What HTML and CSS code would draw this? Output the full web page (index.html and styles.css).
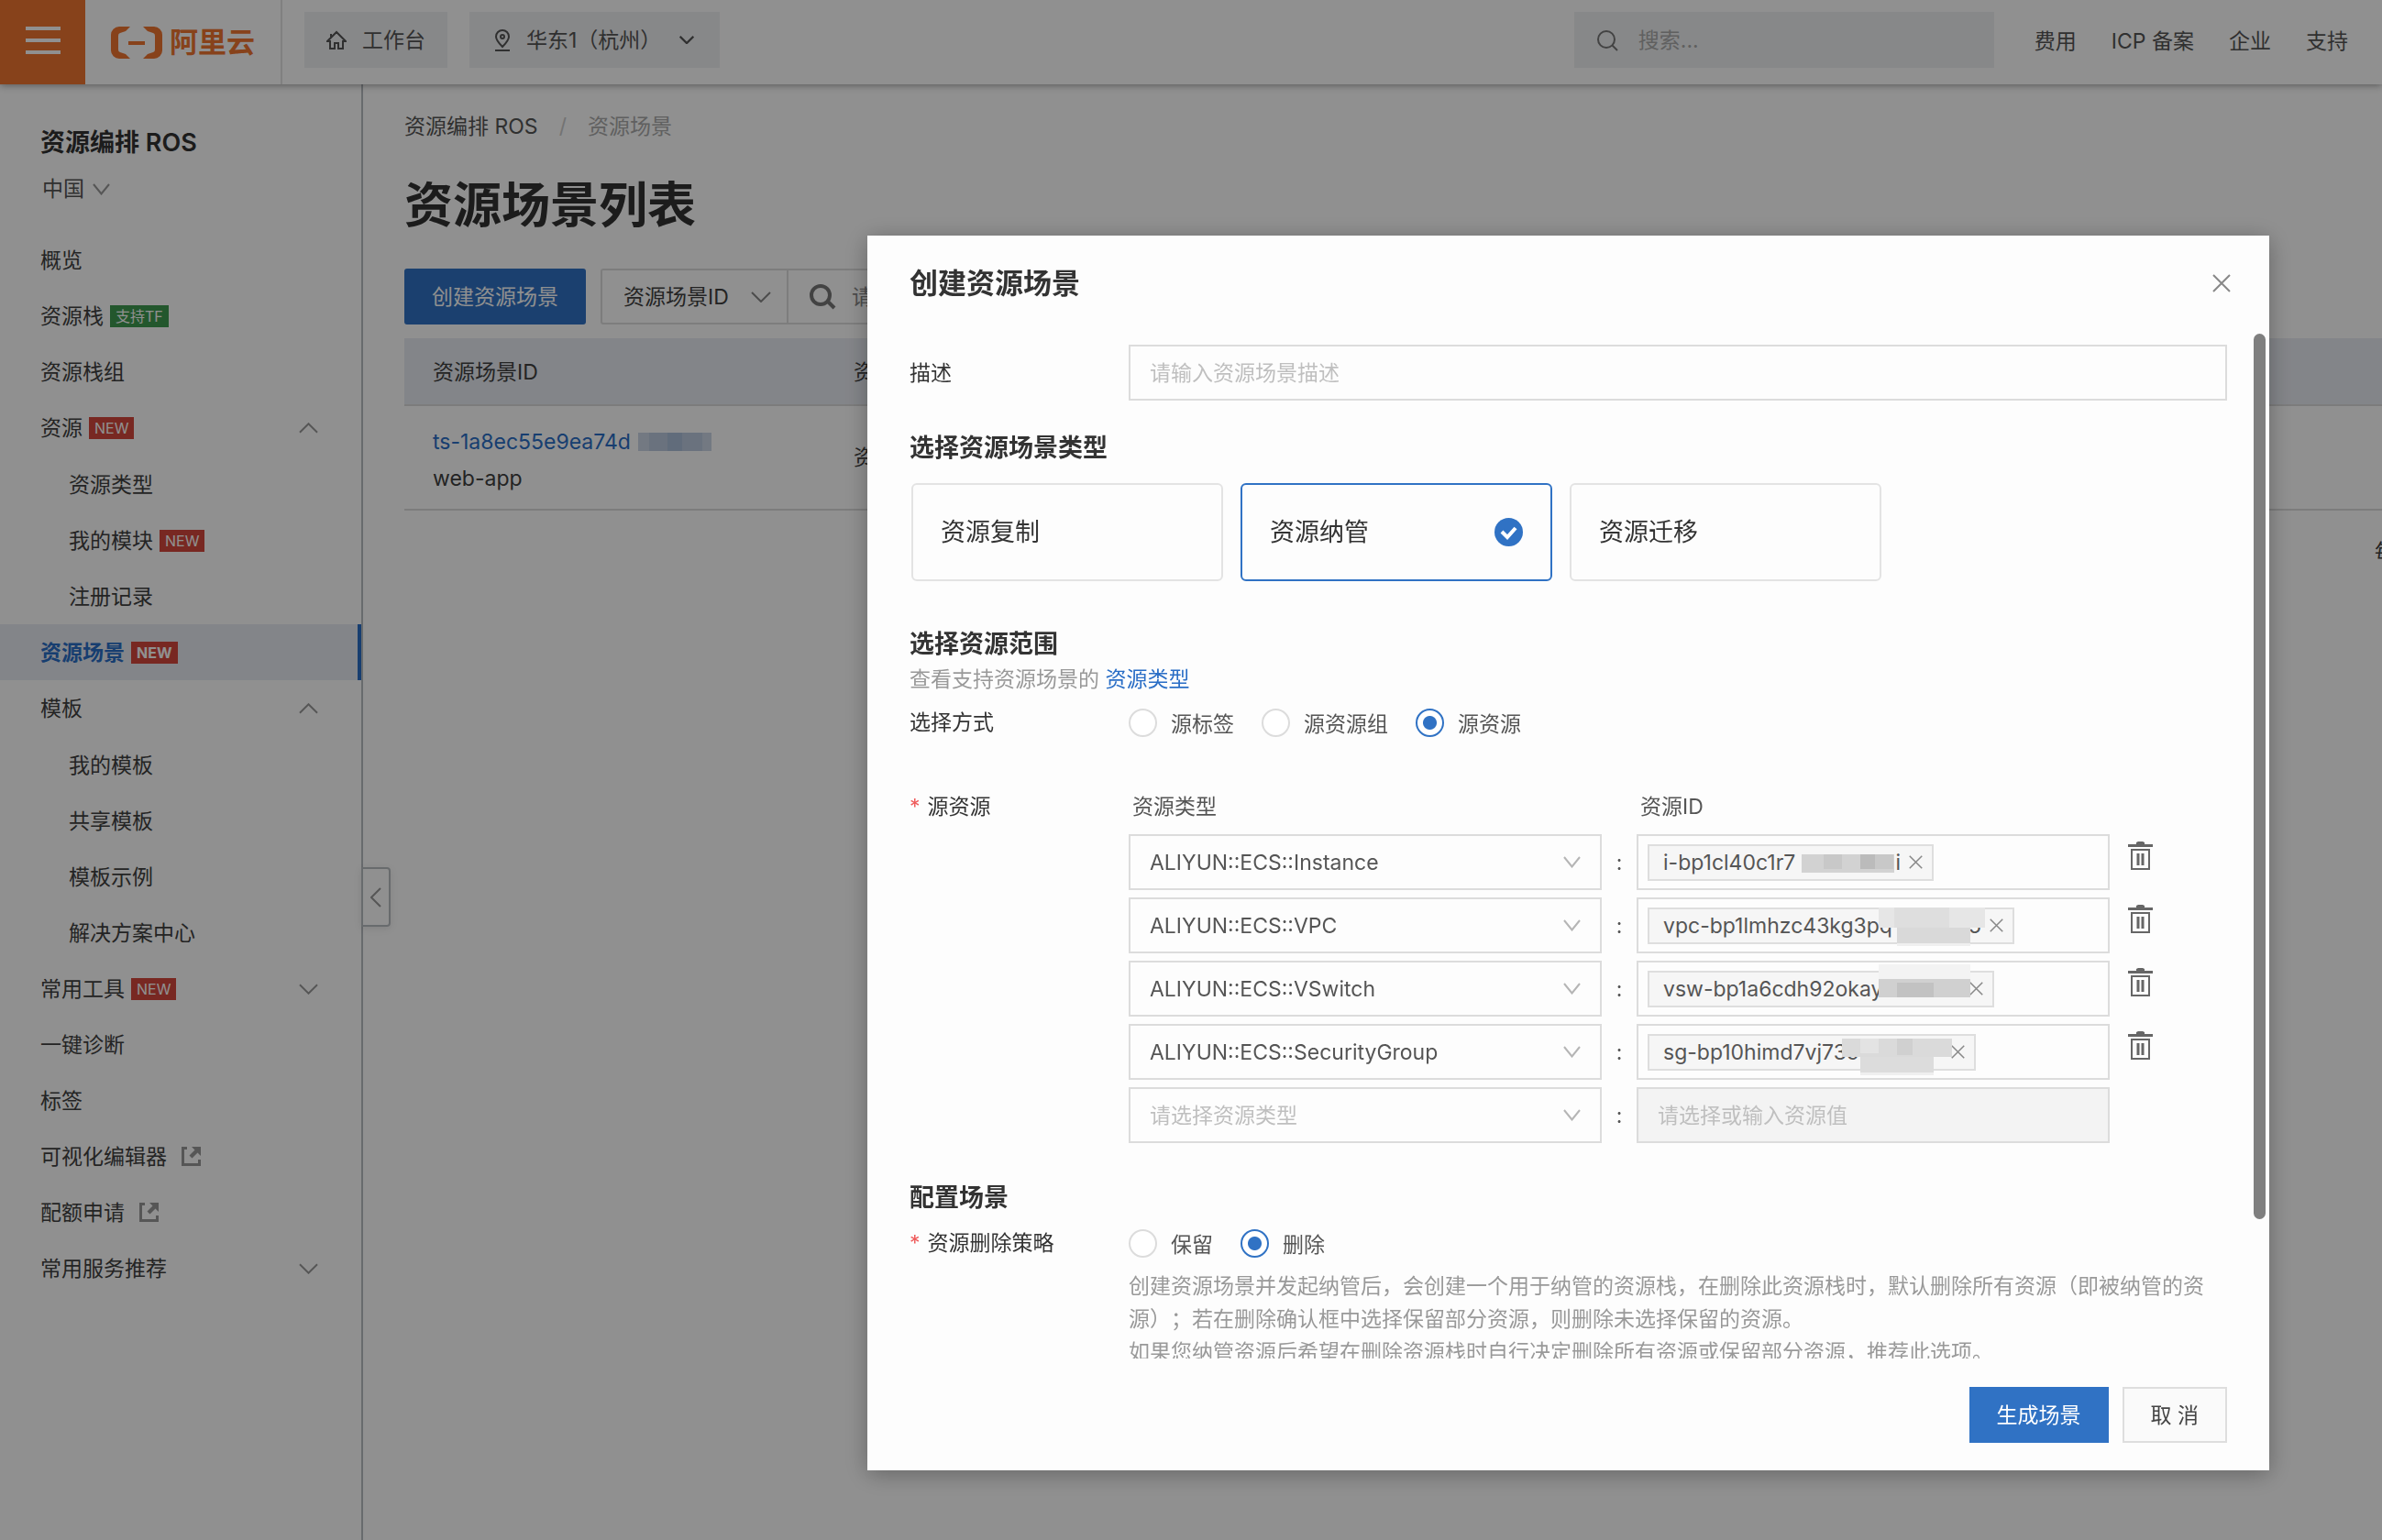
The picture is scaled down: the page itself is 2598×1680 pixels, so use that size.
FILE: index.html
```html
<!DOCTYPE html>
<html lang="zh-CN">
<head>
<meta charset="utf-8">
<title>资源场景列表</title>
<meta name="viewport" content="width=device-width, initial-scale=1">
<link rel="stylesheet" href="styles.css">
</head>
<body>
<svg width="0" height="0" class="sprite" aria-hidden="true">
  <symbol id="chevron" viewBox="0 0 22 12"><path d="M1 1l10 10L21 1" fill="none" stroke="currentColor" stroke-width="2"/></symbol>
  <symbol id="chevron-deep" viewBox="0 0 19 13"><path d="M1 1l8.500 10.500L18 1" fill="none" stroke="currentColor" stroke-width="2"/></symbol>
  <symbol id="cross" viewBox="0 0 20 20"><path d="M1 1l18 18M19 1L1 19" fill="none" stroke="currentColor" stroke-width="2"/></symbol>
  <symbol id="external" viewBox="0 0 21 21"><path d="M6 1.500H1.500V19.500H19.500V14" fill="none" stroke="currentColor" stroke-width="3"/><path d="M11 0h10v10l-3.500-3.500-6 6-3-3 6-6z" fill="currentColor"/></symbol>
  <symbol id="trash" viewBox="0 0 28 32"><path d="M9 1l2-1h5l2 1v2h9v3H0V3h9zM3 8h21v23H3zM5 10v19h17V10z" fill="currentColor" fill-rule="evenodd"/><path d="M11 13v13M16 13v13" stroke="currentColor" stroke-width="3"/></symbol>
</svg>

<header class="topbar">
  <button class="topbar-menu" type="button" aria-label="菜单"><span></span><span></span><span></span></button>
  <a class="brand" href="#">
    <svg width="56" height="35" viewBox="0 0 56 35" fill="currentColor" aria-hidden="true">
      <path d="M21 0H9a9 9 0 0 0-9 9v17a9 9 0 0 0 9 9h12l-5-5-6-2a3 3 0 0 1-2-3V10a3 3 0 0 1 2-3l6-2z"/>
      <path d="M35 0h12a9 9 0 0 1 9 9v17a9 9 0 0 1-9 9H35l5-5 6-2a3 3 0 0 0 2-3V10a3 3 0 0 0-2-3l-6-2z"/>
      <path d="M19 16h18v4H19z"/>
    </svg>
    <span>阿里云</span>
  </a>
  <div class="topbar-tools">
    <button class="tool" type="button">
      <svg width="22" height="22" viewBox="0 0 22 22" fill="none" stroke="currentColor" stroke-width="2" aria-hidden="true"><path d="M5 8V4M4 12H1L11 2l10 10h-3M4 11v9h5v-6h4v6h5v-9"/></svg>
      工作台
    </button>
    <button class="tool tool-region" type="button">
      <svg width="18" height="24" viewBox="0 0 18 24" fill="none" stroke="currentColor" stroke-width="2" aria-hidden="true"><path d="M9 19C5 15 2 12 2 8a7 7 0 0 1 14 0c0 4-3 7-7 11zM1 23h16"/><circle cx="9" cy="8" r="2"/></svg>
      <span>华东1（杭州）</span>
      <svg width="16" height="9" viewBox="0 0 22 12" aria-hidden="true"><path d="M1 1l10 10L21 1" fill="none" stroke="currentColor" stroke-width="3"/></svg>
    </button>
  </div>
  <label class="search">
    <svg width="24" height="24" viewBox="0 0 24 24" fill="none" stroke="currentColor" stroke-width="2" aria-hidden="true"><circle cx="11" cy="11" r="9"/><path d="M17.500 17.500L23 23"/></svg>
    <input type="text" placeholder="搜索..." aria-label="搜索">
  </label>
  <nav class="topbar-links">
    <a href="#">费用</a><a href="#">ICP 备案</a><a href="#">企业</a><a href="#">支持</a>
  </nav>
</header>

<div class="page">
  <aside class="sidebar">
    <h2 class="sidebar-title">资源编排 ROS</h2>
    <button class="sidebar-region" type="button">中国 <svg width="19" height="13"><use href="#chevron-deep"/></svg></button>
    <ul class="menu">
      <li><a href="#">概览</a></li>
      <li><a href="#">资源栈 <b class="badge badge-green">支持TF</b></a></li>
      <li><a href="#">资源栈组</a></li>
      <li><a href="#">资源 <b class="badge">NEW</b><svg class="fold open" width="21" height="12"><use href="#chevron"/></svg></a>
        <ul class="submenu">
          <li><a href="#">资源类型</a></li>
          <li><a href="#">我的模块 <b class="badge">NEW</b></a></li>
          <li><a href="#">注册记录</a></li>
        </ul>
      </li>
      <li><a class="active" href="#">资源场景 <b class="badge">NEW</b></a></li>
      <li><a href="#">模板<svg class="fold open" width="21" height="12"><use href="#chevron"/></svg></a>
        <ul class="submenu">
          <li><a href="#">我的模板</a></li>
          <li><a href="#">共享模板</a></li>
          <li><a href="#">模板示例</a></li>
          <li><a href="#">解决方案中心</a></li>
        </ul>
      </li>
      <li><a href="#">常用工具 <b class="badge">NEW</b><svg class="fold" width="21" height="12"><use href="#chevron"/></svg></a></li>
      <li><a href="#">一键诊断</a></li>
      <li><a href="#">标签</a></li>
      <li><a href="#">可视化编辑器<svg class="ext" width="21" height="21"><use href="#external"/></svg></a></li>
      <li><a href="#">配额申请<svg class="ext" width="21" height="21"><use href="#external"/></svg></a></li>
      <li><a href="#">常用服务推荐<svg class="fold" width="21" height="12"><use href="#chevron"/></svg></a></li>
    </ul>
    <button class="collapse" type="button" aria-label="收起"><svg width="12" height="22" viewBox="0 0 12 22"><path d="M11 1L1 11l10 10" fill="none" stroke="currentColor" stroke-width="2"/></svg></button>
  </aside>

  <main class="main">
    <nav class="crumbs"><a href="#">资源编排 ROS</a><i>/</i><span>资源场景</span></nav>
    <h1 class="page-title">资源场景列表</h1>
    <div class="toolbar">
      <button class="btn btn-primary btn-create" type="button">创建资源场景</button>
      <div class="filter">
        <div class="filter-field">
          <select aria-label="筛选字段"><option>资源场景ID</option></select>
          <svg width="22" height="12"><use href="#chevron"/></svg>
        </div>
        <label class="filter-search">
          <svg width="30" height="28" viewBox="0 0 30 28" fill="none" stroke="currentColor" stroke-width="4" aria-hidden="true"><circle cx="12" cy="12" r="10"/><path d="M19 18l8 8"/></svg>
          <input type="text" placeholder="请输入" aria-label="搜索场景">
        </label>
      </div>
    </div>
    <div class="listing">
      <table class="table">
        <thead><tr><th class="col-id">资源场景ID</th><th>资源场景类型</th></tr></thead>
        <tbody><tr>
          <td class="cell-id"><a href="#">ts-1a8ec55e9ea74d<svg class="mask-inline" width="80" height="20" viewBox="0 0 80 20"><path fill="#ccd7e7" d="M0 0h80v20H0z"/><path fill="#adc0da" d="M32 0h16v20H32z"/><path fill="#bccbe0" d="M12 0h20v20H12zM48 0h22v20H48z"/></svg></a><br>web-app</td>
          <td>资源纳管</td>
        </tr></tbody>
      </table>
      <div class="pager">每页显示</div>
    </div>
  </main>
</div>

<div class="backdrop">
  <section class="modal" role="dialog" aria-labelledby="dialog-title">
    <header class="modal-head">
      <h2 id="dialog-title">创建资源场景</h2>
      <button class="close" type="button" aria-label="关闭"><svg width="20" height="20"><use href="#cross"/></svg></button>
    </header>
    <form class="modal-body">
      <div class="row">
        <label class="label" for="desc">描述</label>
        <input class="box text-input" id="desc" type="text" placeholder="请输入资源场景描述">
      </div>
      <h3 class="section">选择资源场景类型</h3>
      <div class="cards">
        <button class="card" type="button">资源复制</button>
        <button class="card selected" type="button">资源纳管
          <svg width="31" height="31" viewBox="0 0 31 31" aria-hidden="true"><circle cx="15.500" cy="15.500" r="15.500" fill="#3072c4"/><path d="M8 15l6 6 9-10" fill="none" stroke="#fff" stroke-width="4"/></svg>
        </button>
        <button class="card" type="button">资源迁移</button>
      </div>
      <h3 class="section section-scope">选择资源范围</h3>
      <p class="hint">查看支持资源场景的 <a href="#">资源类型</a></p>
      <div class="row row-radio" role="radiogroup" aria-labelledby="mode-label">
        <span class="label" id="mode-label">选择方式</span>
        <div class="radios">
          <label><input type="radio" name="mode">源标签</label>
          <label><input type="radio" name="mode">源资源组</label>
          <label><input type="radio" name="mode" checked>源资源</label>
        </div>
      </div>
      <div class="row row-source">
        <span class="label label-source"><em>*</em>源资源</span>
        <div class="pairs">
          <div class="pair pair-head"><span>资源类型</span><span></span><span>资源ID</span></div>
          <div class="pair">
            <div class="box pick"><select aria-label="资源类型"><option>ALIYUN::ECS::Instance</option></select><svg width="19" height="13"><use href="#chevron-deep"/></svg></div>
            <i>:</i>
            <div class="box tags"><span class="tag tag-instance">i-bp1cl40c1r7<span class="tail">i</span><button type="button" aria-label="移除"><svg width="15" height="15"><use href="#cross"/></svg></button>
              <svg class="mask mask-instance" width="101" height="20" viewBox="0 0 101 20"><path fill="#d2d2d2" d="M0 0h101v20H0z"/><path fill="#c8c8c8" d="M24 0h20v16H24zM80 0h20v16H80z"/><path fill="#bbb" d="M64 0h16v16H64z"/></svg></span></div>
            <button class="remove" type="button" aria-label="删除"><svg width="28" height="32"><use href="#trash"/></svg></button>
          </div>
          <div class="pair">
            <div class="box pick"><select aria-label="资源类型"><option>ALIYUN::ECS::VPC</option></select><svg width="19" height="13"><use href="#chevron-deep"/></svg></div>
            <i>:</i>
            <div class="box tags"><span class="tag tag-vpc">vpc-bp1lmhzc43kg3pq<span class="tail">5</span><button type="button" aria-label="移除"><svg width="15" height="15"><use href="#cross"/></svg></button>
              <svg class="mask mask-vpc" width="116" height="42" viewBox="0 0 116 42"><path fill="#e6e6e6" d="M0 0h116v22H0z"/><path fill="#dedede" d="M17 0h60v22H17z"/><path fill="#d9d9d9" d="M20 22h80v17H20z"/><path fill="#efefef" d="M20 39h80v3H20z"/></svg></span></div>
            <button class="remove" type="button" aria-label="删除"><svg width="28" height="32"><use href="#trash"/></svg></button>
          </div>
          <div class="pair">
            <div class="box pick"><select aria-label="资源类型"><option>ALIYUN::ECS::VSwitch</option></select><svg width="19" height="13"><use href="#chevron-deep"/></svg></div>
            <i>:</i>
            <div class="box tags"><span class="tag tag-vsw">vsw-bp1a6cdh92okay<button type="button" class="tail" aria-label="移除"><svg width="15" height="15"><use href="#cross"/></svg></button>
              <svg class="mask mask-vsw" width="100" height="36" viewBox="0 0 100 36"><path fill="#f3f3f3" d="M0 0h100v16H0z"/><path fill="#d0d0d0" d="M0 16h100v20H0z"/><path fill="#c2c2c2" d="M20 20h40v16H20z"/></svg></span></div>
            <button class="remove" type="button" aria-label="删除"><svg width="28" height="32"><use href="#trash"/></svg></button>
          </div>
          <div class="pair">
            <div class="box pick"><select aria-label="资源类型"><option>ALIYUN::ECS::SecurityGroup</option></select><svg width="19" height="13"><use href="#chevron-deep"/></svg></div>
            <i>:</i>
            <div class="box tags"><span class="tag tag-sg">sg-bp10himd7vj73c<button type="button" class="tail" aria-label="移除"><svg width="15" height="15"><use href="#cross"/></svg></button>
              <svg class="mask mask-sg" width="120" height="40" viewBox="0 0 120 40"><path fill="#dadada" d="M0 0h120v20H0z"/><path fill="#e3e3e3" d="M20 0h20v16H20z"/><path fill="#d0d0d0" d="M60 0h17v18H60z"/><path fill="#dcdcdc" d="M20 20h80v17H20z"/><path fill="#efefef" d="M20 37h80v3H20z"/></svg></span></div>
            <button class="remove" type="button" aria-label="删除"><svg width="28" height="32"><use href="#trash"/></svg></button>
          </div>
          <div class="pair">
            <div class="box pick empty"><select aria-label="资源类型"><option>请选择资源类型</option></select><svg width="19" height="13"><use href="#chevron-deep"/></svg></div>
            <i>:</i>
            <input class="box text-input" type="text" placeholder="请选择或输入资源值" aria-label="资源ID" disabled>
          </div>
        </div>
      </div>
      <h3 class="section section-config">配置场景</h3>
      <div class="row row-radio" role="radiogroup" aria-labelledby="policy-label">
        <span class="label" id="policy-label"><em>*</em>资源删除策略</span>
        <div class="radios">
          <label><input type="radio" name="policy">保留</label>
          <label><input type="radio" name="policy" checked>删除</label>
        </div>
      </div>
      <div class="row">
        <p class="note">创建资源场景并发起纳管后，会创建一个用于纳管的资源栈，在删除此资源栈时，默认删除所有资源（即被纳管的资源）；若在删除确认框中选择保留部分资源，则删除未选择保留的资源。<br>如果您纳管资源后希望在删除资源栈时自行决定删除所有资源或保留部分资源，推荐此选项。</p>
      </div>
    </form>
    <footer class="modal-foot">
      <button class="btn btn-primary" type="button">生成场景</button>
      <button class="btn" type="button">取 消</button>
    </footer>
    <div class="scroll-thumb"></div>
  </section>
</div>
</body>
</html>
```

FILE: styles.css
```css
* { box-sizing: border-box; }

body {
  margin: 0;
  min-height: 100vh;
  overflow: hidden;
  display: flex;
  flex-direction: column;
  background: #fff;
  color: #404040;
  font: 23px/36px Inter, "Noto Sans CJK SC", sans-serif;
  text-spacing-trim: space-all;
}

h1, h2, h3, p, ul { margin: 0; padding: 0; }
ul { list-style: none; }
em, i { font-style: normal; }
a { color: inherit; text-decoration: none; }
button, input, select { font: inherit; color: inherit; }
button { margin: 0; padding: 0; border: 0; background: none; cursor: pointer; }
select { appearance: none; border: 0; background: none; outline: 0; }
svg { flex: none; }
.sprite { position: absolute; }

/* Top bar */
.topbar {
  position: relative;
  z-index: 1;
  display: flex;
  align-items: center;
  height: 92px;
  padding-right: 37px;
  background: #fff;
  box-shadow: 0 1px 8px rgba(0, 0, 0, .4);
}
.topbar-menu {
  display: flex;
  flex-direction: column;
  justify-content: center;
  align-items: center;
  gap: 9px;
  width: 93px;
  height: 92px;
  padding-bottom: 4px;
  background: #ef7530;
}
.topbar-menu span { width: 38px; height: 4px; background: #fff; }
.brand {
  display: flex;
  align-items: center;
  gap: 8px;
  width: 215px;
  height: 92px;
  padding-left: 28px;
  border-right: 2px solid #e3e3e3;
  color: #ef7530;
  font-size: 31px;
  font-weight: 700;
}
.topbar-tools { display: flex; gap: 24px; margin: 0 auto 5px 24px; }
.tool {
  display: flex;
  align-items: center;
  gap: 17px;
  height: 61px;
  padding: 0 24px;
  background: #eff1f3;
  color: #555;
}
.tool-region { padding: 0 28px 0 27px; }
.tool-region span { margin-right: 3px; }
.search {
  display: flex;
  align-items: center;
  gap: 20px;
  width: 458px;
  height: 61px;
  margin: 0 44px 5px 0;
  padding: 0 24px;
  background: #eff1f3;
  color: #777;
}
.search input { width: 100%; min-width: 0; border: 0; background: none; }
.search input::placeholder { color: #aaa; }
.topbar-links { display: flex; gap: 38px; margin-bottom: 3px; color: #555; }

/* Sidebar */
.page { flex: 1; display: flex; }
.sidebar {
  position: relative;
  width: 396px;
  padding-top: 44px;
  border-right: 2px solid #b9bdc2;
}
.sidebar-title { padding-left: 44px; font-size: 27px; line-height: 40px; font-weight: 600; color: #333; }
.sidebar-region { display: flex; align-items: center; gap: 9px; margin: 12px 0 29px; padding-left: 46px; line-height: 36px; color: #555; }
.sidebar-region svg { color: #999; }
.menu a { display: flex; align-items: center; height: 61px; padding: 0 47px 0 44px; }
.submenu { padding-top: 1px; }
.submenu a { padding-left: 75px; }
.menu .active { background: #e9ecf3; border-right: 4px solid #2a6ec6; color: #2a6ec6; font-weight: 600; }
.badge { height: 24px; margin-left: 7px; padding: 0 6px; background: #d5483d; color: #fff; font-size: 16px; line-height: 24px; font-weight: 400; }
.active .badge { font-weight: 700; }
.badge-green { background: #3f9b50; }
.fold { margin-left: auto; color: #999; }
.open { transform: rotate(180deg); }
.ext { margin-left: 16px; color: #999; }
.collapse {
  position: absolute;
  top: 854px;
  left: 394px;
  display: grid;
  place-items: center;
  width: 32px;
  height: 65px;
  border: 2px solid #b9bdc2;
  border-radius: 0 4px 4px 0;
  box-shadow: 0 2px 8px rgba(0, 0, 0, .1);
  color: #999;
}

/* Resource list */
.main { flex: 1; min-width: 0; overflow: hidden; padding: 28px 0 0 45px; }
.crumbs { display: flex; gap: 23px; color: #555; }
.crumbs span { color: #aaa; }
.crumbs i { color: #ccc; }
.page-title { margin: 28px 0 29px; font-size: 53px; line-height: 80px; font-weight: 600; color: #333; }
.toolbar { display: flex; gap: 16px; margin-bottom: 15px; }
.btn {
  height: 61px;
  padding: 0 29px;
  border: 2px solid #dedede;
  background: #fafafa;
  color: #444;
}
.btn-primary { padding: 0 28px; border-color: #3072c4; background: #3072c4; color: #fff; }
.btn-create { border-radius: 3px; }
.filter { display: flex; width: 900px; height: 61px; border: 2px solid #dedede; border-radius: 3px; }
.filter-field { display: flex; align-items: center; width: 203px; padding-left: 23px; border-right: 2px solid #dedede; }
.filter-field select { width: 139px; padding: 0; }
.filter-field svg { color: #888; }
.filter-search { display: flex; align-items: center; gap: 16px; padding-left: 23px; color: #777; }
.filter-search input { border: 0; padding: 0; background: none; }
.filter-search input::placeholder { color: #888; }

.listing { margin-right: -84px; }
.table { width: 100%; border-collapse: collapse; table-layout: fixed; text-align: left; line-height: 40px; }
.table th, .table td { padding: 16px 31px; border-bottom: 2px solid #dcdcdc; }
.table th { padding: 17px 31px 15px; background: #e9ecf3; font-weight: 400; }
.table .cell-id { padding: 19px 31px 13px; }
.table td a { color: #2a6ec6; }
.col-id { width: 459px; }
.mask-inline { margin-left: 8px; vertical-align: -2px; }
.pager { display: flex; justify-content: flex-end; margin-top: 27px; }

/* Dialog */
.backdrop {
  position: fixed;
  inset: 0;
  z-index: 2;
  display: flex;
  justify-content: flex-end;
  padding: 257px 123px 76px;
  background: rgba(0, 0, 0, .435);
}
.modal {
  position: relative;
  display: flex;
  flex-direction: column;
  width: min(1529px, 100%);
  background: #fdfdfd;
  box-shadow: 0 4px 24px rgba(0, 0, 0, .3);
  color: #333;
}
.modal-head { display: flex; align-items: center; justify-content: space-between; height: 104px; padding: 0 42px 0 46px; }
.modal-head h2 { font-size: 31px; line-height: 46px; font-weight: 600; }
.close { display: flex; color: #888; }
.modal-body { flex: 1; min-height: 0; overflow: hidden; padding: 15px 46px 0; }
.row { display: flex; align-items: center; }
.label { width: 239px; }
em { margin-right: 8px; color: #ef5b5b; }
.box { height: 61px; border: 2px solid #dcdcdc; background: #fdfdfd; }
.text-input { flex: 1; min-width: 0; padding: 0 21px; }
.text-input::placeholder { color: #bfbfbf; opacity: 1; }
.text-input:disabled { background: #f3f3f3; }
.section { margin-top: 32px; font-size: 27px; line-height: 40px; font-weight: 600; }
.section-scope { margin-top: 49px; }
.section-config { margin-top: 40px; }
.cards { display: flex; gap: 19px; margin-top: 18px; padding-left: 2px; }
.card {
  display: flex;
  align-items: center;
  justify-content: space-between;
  width: 340px;
  height: 107px;
  padding: 0 30px;
  border: 2px solid #e3e3e3;
  border-radius: 6px;
  font-size: 27px;
}
.card.selected { border-color: #3072c4; }
.hint { color: #999; }
.hint a { color: #2a6ec6; }
.row-radio { height: 58px; }
.radios { display: flex; gap: 30px; padding-top: 3px; color: #555; }
.radios label { display: flex; align-items: center; gap: 15px; }
.radios input {
  appearance: none;
  width: 31px;
  height: 31px;
  margin: 0 0 3px;
  border: 2px solid #dcdcdc;
  border-radius: 50%;
  background: #fff;
}
.radios input:checked { border-color: #3072c4; background: radial-gradient(circle, #3072c4 7px, #fff 8px); }
.row-source { align-items: flex-start; margin-top: 33px; }
.label-source { line-height: 60px; }
.pairs { flex: 1; display: grid; gap: 8px; color: #555; }
.pair { display: grid; grid-template-columns: 516px 38px 516px 28px; align-items: center; }
.pair > i { text-align: center; }
.pair > .remove { display: flex; margin-left: 20px; height: 45px; color: #666; }
.pair-head { height: 52px; padding: 8px 0 0 4px; }
.pick { display: flex; align-items: center; padding-right: 21px; }
.pick select { flex: 1; height: 100%; padding: 0 21px; }
.pick svg { color: #b5b5b5; }
.empty select { color: #bfbfbf; }
.tags { display: flex; align-items: center; padding-left: 10px; }
.tag {
  position: relative;
  display: flex;
  align-items: center;
  height: 40px;
  padding: 0 10px 0 15px;
  border: 2px solid #dedede;
  background: #f6f6f6;
}
.tag .tail { margin-left: auto; }
.tag button { display: flex; margin-left: 9px; color: #888; }
.tag-instance { width: 312px; }
.tag-vpc { width: 400px; }
.tag-vsw { width: 378px; }
.tag-sg { width: 358px; }
.mask { position: absolute; }
.mask-instance { left: 166px; top: 9px; }
.mask-vpc { left: 250px; top: -2px; }
.mask-vsw { left: 250px; top: -9px; }
.mask-sg { left: 210px; top: 3px; }
.note { margin-left: 239px; color: #999; }
.modal-foot { display: flex; justify-content: flex-end; gap: 15px; padding: 31px 46px 30px; }
.scroll-thumb { position: absolute; top: 107px; right: 4px; width: 13px; height: 966px; border-radius: 7px; background: #7f7f7f; }
```
